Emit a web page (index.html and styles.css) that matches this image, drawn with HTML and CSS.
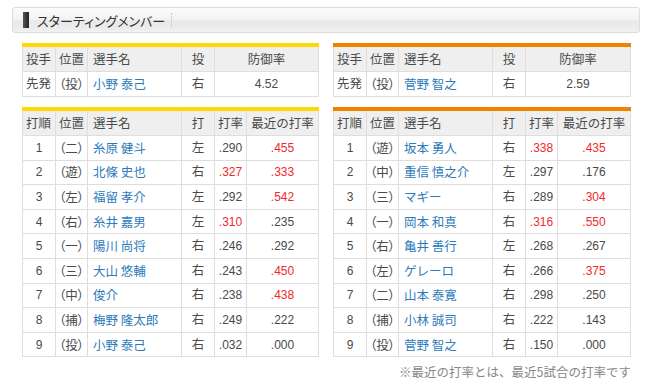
FILE: index.html
```html
<!DOCTYPE html>
<html lang="ja">
<head>
<meta charset="utf-8">
<link rel="stylesheet" href="styles.css">
</head>
<body>
<div class="page">
  <div class="title"><span class="mark"></span><span class="title-text">スターティングメンバー</span><span class="sep"></span></div>
  <div class="teams">
    <div class="team home">
      <table class="pitcher">
        <colgroup><col class="c1"><col class="c2"><col class="c3"><col class="c4"><col></colgroup>
        <tr><th class="l">投手</th><th class="l">位置</th><th class="l">選手名</th><th>投</th><th>防御率</th></tr>
        <tr><td class="l">先発</td><td class="pos">（投）</td><td class="name">小野 泰己</td><td>右</td><td class="num">4.52</td></tr>
      </table>
      <table class="lineup">
        <colgroup><col class="c1"><col class="c2"><col class="c3"><col class="c4"><col class="c5"><col></colgroup>
        <tr><th class="l">打順</th><th class="l">位置</th><th class="l">選手名</th><th>打</th><th>打率</th><th>最近の打率</th></tr>
        <tr><td class="num">1</td><td class="pos">（二）</td><td class="name">糸原 健斗</td><td>左</td><td class="num">.290</td><td class="num red">.455</td></tr>
        <tr><td class="num">2</td><td class="pos">（遊）</td><td class="name">北條 史也</td><td>右</td><td class="num red">.327</td><td class="num red">.333</td></tr>
        <tr><td class="num">3</td><td class="pos">（左）</td><td class="name">福留 孝介</td><td>左</td><td class="num">.292</td><td class="num red">.542</td></tr>
        <tr><td class="num">4</td><td class="pos">（右）</td><td class="name">糸井 嘉男</td><td>左</td><td class="num red">.310</td><td class="num">.235</td></tr>
        <tr><td class="num">5</td><td class="pos">（一）</td><td class="name">陽川 尚将</td><td>右</td><td class="num">.246</td><td class="num">.292</td></tr>
        <tr><td class="num">6</td><td class="pos">（三）</td><td class="name">大山 悠輔</td><td>右</td><td class="num">.243</td><td class="num red">.450</td></tr>
        <tr><td class="num">7</td><td class="pos">（中）</td><td class="name">俊介</td><td>右</td><td class="num">.238</td><td class="num red">.438</td></tr>
        <tr><td class="num">8</td><td class="pos">（捕）</td><td class="name">梅野 隆太郎</td><td>右</td><td class="num">.249</td><td class="num">.222</td></tr>
        <tr><td class="num">9</td><td class="pos">（投）</td><td class="name">小野 泰己</td><td>右</td><td class="num">.032</td><td class="num">.000</td></tr>
      </table>
    </div>
    <div class="team away">
      <table class="pitcher">
        <colgroup><col class="c1"><col class="c2"><col class="c3"><col class="c4"><col></colgroup>
        <tr><th class="l">投手</th><th class="l">位置</th><th class="l">選手名</th><th>投</th><th>防御率</th></tr>
        <tr><td class="l">先発</td><td class="pos">（投）</td><td class="name">菅野 智之</td><td>右</td><td class="num">2.59</td></tr>
      </table>
      <table class="lineup">
        <colgroup><col class="c1"><col class="c2"><col class="c3"><col class="c4"><col class="c5"><col></colgroup>
        <tr><th class="l">打順</th><th class="l">位置</th><th class="l">選手名</th><th>打</th><th>打率</th><th>最近の打率</th></tr>
        <tr><td class="num">1</td><td class="pos">（遊）</td><td class="name">坂本 勇人</td><td>右</td><td class="num red">.338</td><td class="num red">.435</td></tr>
        <tr><td class="num">2</td><td class="pos">（中）</td><td class="name">重信 慎之介</td><td>左</td><td class="num">.297</td><td class="num">.176</td></tr>
        <tr><td class="num">3</td><td class="pos">（三）</td><td class="name">マギー</td><td>右</td><td class="num">.289</td><td class="num red">.304</td></tr>
        <tr><td class="num">4</td><td class="pos">（一）</td><td class="name">岡本 和真</td><td>右</td><td class="num red">.316</td><td class="num red">.550</td></tr>
        <tr><td class="num">5</td><td class="pos">（右）</td><td class="name">亀井 善行</td><td>左</td><td class="num">.268</td><td class="num">.267</td></tr>
        <tr><td class="num">6</td><td class="pos">（左）</td><td class="name">ゲレーロ</td><td>右</td><td class="num">.266</td><td class="num red">.375</td></tr>
        <tr><td class="num">7</td><td class="pos">（二）</td><td class="name">山本 泰寛</td><td>右</td><td class="num">.298</td><td class="num">.250</td></tr>
        <tr><td class="num">8</td><td class="pos">（捕）</td><td class="name">小林 誠司</td><td>右</td><td class="num">.222</td><td class="num">.143</td></tr>
        <tr><td class="num">9</td><td class="pos">（投）</td><td class="name">菅野 智之</td><td>右</td><td class="num">.150</td><td class="num">.000</td></tr>
      </table>
    </div>
  </div>
  <p class="note">※最近の打率とは、最近5試合の打率です</p>
</div>
</body>
</html>
```

FILE: styles.css
```css
html, body {
  margin: 0;
  padding: 0;
  background: #fff;
}
body {
  font-family: "Liberation Sans", "Noto Sans CJK JP", sans-serif;
  color: #4a4a4a;
}
.page {
  width: 650px;
  padding-top: 7px;
}
.title {
  margin: 0 10px 0 12px;
  height: 24px;
  border: 1px solid #dcdcdc;
  border-radius: 3px;
  background: linear-gradient(to bottom, #fbfbfb 0%, #f3f3f3 48%, #e9e9e9 52%, #ececec 85%, #f2f2f2 100%);
  display: flex;
  align-items: center;
  padding-left: 10px;
}
.mark {
  width: 6px;
  height: 16px;
  background: linear-gradient(to right, #555, #222);
  margin-right: 8px;
}
.title-text {
  font-family: "Noto Sans CJK JP", sans-serif;
  font-size: 13px;
  font-feature-settings: "palt";
  color: #333;
}
.sep {
  width: 0;
  height: 14px;
  border-left: 1px dotted #c4c4c4;
  margin-left: 6px;
}
.teams {
  display: flex;
  gap: 14px;
  padding-left: 22px;
  margin-top: 10px;
}
.team {
  display: flex;
  flex-direction: column;
  gap: 10px;
}
.home { width: 297px; }
.away { width: 298px; }
table {
  width: 100%;
  border-collapse: collapse;
  table-layout: fixed;
  font-size: 12.5px;
}
.home table { border-top: 4px solid #ffd900; }
.away table { border-top: 4px solid #ef8200; }
col.c1 { width: 33px; }
col.c2 { width: 32px; }
col.c3 { width: 94px; }
col.c4 { width: 33px; }
col.c5 { width: 32px; }
th, td {
  border: 1px solid #dedede;
  padding: 0 3px;
  text-align: center;
  white-space: nowrap;
  overflow: hidden;
  font-weight: normal;
  line-height: 16px;
  color: #4a4a4a;
}
th {
  background: #efefef;
  height: 24px;
  font-family: "Noto Sans CJK JP", sans-serif;
}
.pitcher td { height: 24px; }
.lineup td { height: 23.6px; }
.l { text-align: left; }
.pos {
  text-align: left;
  font-family: "Noto Sans CJK JP", sans-serif;
  font-feature-settings: "palt";
}
.name {
  text-align: left;
  padding-left: 5px;
  color: #2d7bbb;
  font-family: "Noto Sans CJK JP", sans-serif;
}
th.l:nth-child(3) { padding-left: 5px; }
.num {
  font-size: 12px;
  color: #4a4a4a;
}
.num.red { color: #f22a2a; }
.note {
  margin: 5px 19px 0 0;
  text-align: right;
  font-size: 12.5px;
  color: #888;
  font-family: "Noto Sans CJK JP", sans-serif;
}
```
